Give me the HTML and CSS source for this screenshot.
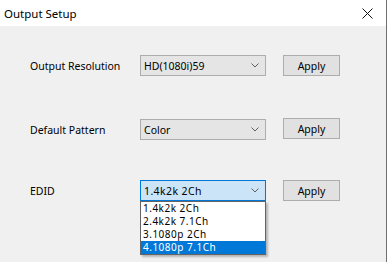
FILE: index.html
```html
<!DOCTYPE html>
<html>
<head>
  <title>Output Setup</title>
  <link rel="stylesheet" href="styles.css">
</head>
<body>
  <div class="window">
    <div class="titlebar">
      <span class="title">Output Setup</span>
      <svg class="close" width="11" height="11" viewBox="0 0 11 11">
        <path d="M0.5 0.5 L10.5 10.5 M10.5 0.5 L0.5 10.5" stroke="#111" stroke-width="1" fill="none"/>
      </svg>
    </div>

    <div class="content">
      <!-- Resolucion -->
      <div class="row row-first">
        <span class="label">Output Resolution</span>
        <div class="combo">
          <span class="combo-text">HD(1080i)59</span>
          <svg class="chevron" width="8" height="5" viewBox="0 0 8 5"><path d="M0.5 0.5 L4 4 L7.5 0.5" stroke="#606060" fill="none"/></svg>
        </div>
        <button class="apply">Apply</button>
      </div>

      <!-- Patron -->
      <div class="row row-second">
        <span class="label">Default Pattern</span>
        <div class="combo">
          <span class="combo-text">Color</span>
          <svg class="chevron" width="8" height="5" viewBox="0 0 8 5"><path d="M0.5 0.5 L4 4 L7.5 0.5" stroke="#606060" fill="none"/></svg>
        </div>
        <button class="apply apply-up">Apply</button>
      </div>

      <!-- EDID con lista abierta -->
      <div class="row row-third">
        <span class="label">EDID</span>
        <div class="combo combo-open">
          <span class="combo-text edid-text">1.4k2k 2Ch</span>
          <svg class="chevron" width="8" height="5" viewBox="0 0 8 5"><path d="M0.5 0.5 L4 4 L7.5 0.5" stroke="#606060" fill="none"/></svg>
          <ul class="dropdown">
            <li>1.4k2k 2Ch</li>
            <li>2.4k2k 7.1Ch</li>
            <li>3.1080p 2Ch</li>
            <li class="selected">4.1080p 7.1Ch</li>
          </ul>
        </div>
        <button class="apply">Apply</button>
      </div>
    </div>
  </div>
</body>
</html>
```

FILE: styles.css
```css
/* Ventana */
body {
  margin: 0;
  padding: 0;
  background-color: #f0f0f0;
  font-family: "Noto Sans", "Open Sans", sans-serif;
}

.window {
  width: 386px;
  height: 262px;
  border-right: 1px solid #707070;
  background-color: #f0f0f0;
}

/* Barra de titulo */
.titlebar {
  height: 26px;
  background-color: #fff;
  display: flex;
  align-items: center;
  justify-content: space-between;
  padding: 0 13px 0 4px;
}

.title {
  font-size: 11.5px;
  color: #000;
}

.close {
  display: block;
}

/* Filas */
.content {
  padding-left: 30px;
}

.row {
  display: flex;
  align-items: center;
  height: 21px;
}

.row-first {
  margin-top: 29px;
}

.row-second {
  margin-top: 43px;
}

.row-third {
  margin-top: 40px;
}

.label {
  width: 110px;
  font-size: 10.5px;
  color: #000;
}

/* Combo */
.combo {
  position: relative;
  box-sizing: border-box;
  width: 126px;
  height: 21px;
  border: 1px solid #adadad;
  background-color: #e5e5e5;
  display: flex;
  align-items: center;
  justify-content: space-between;
  padding: 0 6px 0 3px;
}

.combo-text {
  font-size: 10.5px;
  color: #000;
}

.combo-open {
  border-color: #0078d7;
  background-color: #cce4f7;
}

.edid-text {
  letter-spacing: 0.4px;
}

.chevron {
  display: block;
}

/* Lista desplegable */
.dropdown {
  position: absolute;
  left: -1px;
  top: 20px;
  width: 126px;
  box-sizing: border-box;
  margin: 0;
  padding: 0;
  list-style: none;
  background-color: #fff;
  border: 1px solid #646464;
  box-shadow: 2px 2px 2px rgba(0, 0, 0, 0.25);
}

.dropdown li {
  height: 13px;
  line-height: 13px;
  padding-left: 2px;
  font-size: 10px;
  letter-spacing: 0.5px;
  color: #000;
  overflow: hidden;
}

.dropdown li.selected {
  background-color: #0078d7;
  color: #fff;
}

/* Boton */
.apply {
  box-sizing: border-box;
  width: 57px;
  height: 21px;
  margin-left: 17px;
  padding: 0;
  border: 1px solid #adadad;
  background-color: #e1e1e1;
  font-family: "Noto Sans", "Open Sans", sans-serif;
  font-size: 10.5px;
  color: #000;
}

.apply-up {
  margin-top: -2px;
}
```
